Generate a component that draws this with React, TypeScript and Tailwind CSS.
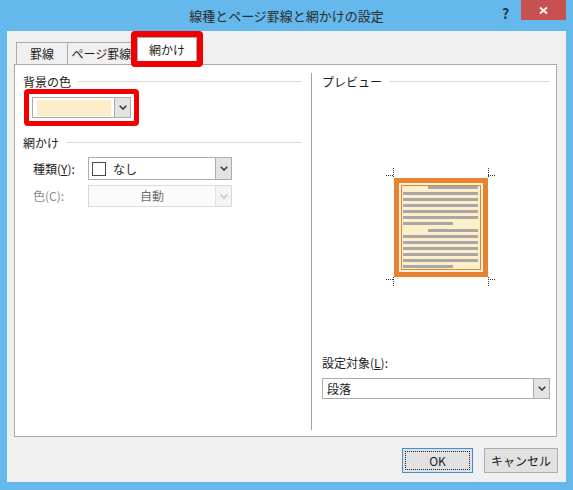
import React from "react";

function Chevron({ disabled }: { disabled?: boolean }) {
  return (
    <svg width="8" height="5" viewBox="0 0 8 5" className={disabled ? "text-[#c4c4c4]" : "text-[#3c3c3c]"}>
      <path d="M0.7 0.7 L4 4 L7.3 0.7" fill="none" stroke="currentColor" strokeWidth="1.6" />
    </svg>
  );
}

function ArrowBox({ disabled }: { disabled?: boolean }) {
  return (
    <div
      className={
        disabled
          ? "flex w-[16px] items-center justify-center self-stretch border-l border-[#e3e3e3] bg-[#f4f4f4]"
          : "flex w-[16px] items-center justify-center self-stretch border-l border-[#acacac] bg-[#e3e3e3]"
      }
    >
      <Chevron disabled={disabled} />
    </div>
  );
}

function GroupHeader({ label }: { label: string }) {
  return (
    <div className="flex h-[15px] items-center gap-[7px]">
      <span className="leading-none">{label}</span>
      <div className="h-px flex-1 bg-[#dcdcdc]" />
    </div>
  );
}

function Preview() {
  const full = [21, 27, 33, 39, 45, 51, 70, 76, 82, 88, 94];
  const shortRight = [21, 64];
  const shortLeft = [57, 100];
  const fullRows = [27, 33, 39, 45, 51, 70, 76, 82, 88, 94];
  return (
    <svg width="130" height="125" viewBox="0 0 130 125">
      {/* corner marks */}
      <g stroke="#333" strokeWidth="1" strokeDasharray="1 1" fill="none">
        <path d="M22.5 3 V12 M15 10.5 H23" />
        <path d="M117.5 3 V12 M117 10.5 H125" />
        <path d="M22.5 112 V122 M15 114.5 H23" />
        <path d="M117.5 112 V122 M117 114.5 H125" />
      </g>
      <rect x="23" y="13" width="94" height="99" fill="#e9822f" />
      <rect x="28" y="18" width="84" height="89" fill="#fdf3dc" />
      <rect x="30.5" y="20.5" width="79" height="84" fill="#fdefcc" stroke="#e9822f" strokeWidth="1" />
      <g fill="#a9a8a5">
        {shortRight.map((y) => (
          <rect key={"r" + y} x="57" y={y} width="50" height="3" />
        ))}
        {fullRows.map((y) => (
          <rect key={"f" + y} x="32" y={y} width="75" height="3" />
        ))}
        {shortLeft.map((y) => (
          <rect key={"l" + y} x="32" y={y} width="50" height="3" />
        ))}
      </g>
      {full.length === 0 && null}
    </svg>
  );
}

export default function App() {
  return (
    <div className="flex h-[490px] w-[573px] flex-col bg-[#64b8ec] px-[7px] pb-[8px] font-['Noto_Sans_CJK_JP',sans-serif] text-[12px] text-[#1b1b1b]">
      {/* Title bar */}
      <div className="flex h-[31px] items-start">
        <div className="w-[76px]" />
        <div className="flex-1 text-center text-[13px] leading-[31px] text-[#2b2b2b]">線種とページ罫線と網かけの設定</div>
        <div className="flex items-start">
          <div className="flex h-[26px] w-[31px] items-center justify-center text-[14px] font-bold text-[#23374d]">?</div>
          <div className="flex h-[20px] w-[45px] items-center justify-center bg-[#c75050]">
            <svg width="9" height="7" viewBox="0 0 9 7">
              <path d="M1 0.5 L8 6.5 M8 0.5 L1 6.5" stroke="#fff" strokeWidth="1.8" />
            </svg>
          </div>
        </div>
      </div>

      {/* Client area */}
      <div className="flex flex-1 flex-col bg-[#f0f0f0]">
        {/* Tabs */}
        <div className="mt-[6px] flex h-[27px] items-end pl-[9px]">
          <div className="flex h-[22px] w-[52px] items-center justify-center border border-b-0 border-[#acacac] bg-[#f0f0f0]">罫線</div>
          <div className="flex h-[22px] w-[70px] items-center justify-center border border-b-0 border-l-0 border-[#acacac] bg-[#f0f0f0] pr-[2px]">
            ページ罫線
          </div>
          <div className="relative z-10 -mb-px -ml-px flex h-[28px] w-[60px] items-center justify-center border border-b-0 border-[#acacac] bg-white pb-[3px]">
            網かけ
            <div className="absolute -bottom-[2px] -left-[7px] -right-[7px] -top-[7px] rounded-[4px] border-[6px] border-[#f00000]" />
          </div>
        </div>

        {/* Panel */}
        <div className="ml-[7px] mr-[9px] flex h-[373px] border border-[#a9a9a9] bg-white">
          {/* Left column */}
          <div className="flex w-[296px] flex-col pl-[8px] pr-[9px] pt-[9px]">
            <GroupHeader label="背景の色" />
            <div className="ml-[1px] w-[115px] rounded-[4px] border-[5px] border-[#f00000] p-[3px]">
              <div className="flex h-[21px] items-center border border-[#acacac] bg-white">
                <div className="ml-[4px] h-[16px] w-[74px] bg-[#fdeecb]" />
                <div className="flex-1" />
                <ArrowBox />
              </div>
            </div>
            <div className="mt-[9px]">
              <GroupHeader label="網かけ" />
            </div>
            <div className="mt-[7px] flex h-[23px] items-center pl-[10px]">
              <span className="w-[55px]">
                種類(<span className="underline">Y</span>):
              </span>
              <div className="flex h-full w-[144px] items-center border border-[#acacac] bg-white">
                <div className="ml-[3px] h-[14px] w-[14px] border border-[#4a4a4a] bg-white" />
                <span className="ml-[7px] flex-1">なし</span>
                <ArrowBox />
              </div>
            </div>
            <div className="mt-[5px] flex h-[22px] items-center pl-[10px] text-[#8d8d8d]">
              <span className="w-[55px]">色(C):</span>
              <div className="flex h-full w-[144px] items-center border border-[#d9d9d9] bg-[#fbfbfb]">
                <span className="flex-1 text-center text-[#6f6f6f]">自動</span>
                <ArrowBox disabled />
              </div>
            </div>
          </div>

          {/* Right column */}
          <div className="mb-[6px] mt-[8px] flex flex-1 flex-col border-l border-[#a0a0a0] pl-[10px] pr-[6px]">
            <div className="mt-[1px]">
              <GroupHeader label="プレビュー" />
            </div>
            <div className="mt-[76px] flex justify-center">
              <Preview />
            </div>
            <div className="mt-[65px] flex h-[16px] items-center">
              設定対象(<span className="underline">L</span>):
            </div>
            <div className="mt-[7px] flex h-[21px] items-center border border-[#acacac] bg-white">
              <span className="ml-[4px] flex-1">段落</span>
              <ArrowBox />
            </div>
          </div>
        </div>

        {/* Buttons */}
        <div className="mt-[11px] flex justify-end gap-[11px] pr-[8px]">
          <div className="h-[25px] w-[71px] border border-[#3b8fd6] bg-[#e1e1e1] p-[2px]">
            <div className="flex h-full items-center justify-center border border-dotted border-[#222]">OK</div>
          </div>
          <div className="flex h-[25px] w-[74px] items-center justify-center border border-[#adadad] bg-[#e1e1e1]">キャンセル</div>
        </div>
      </div>
    </div>
  );
}
